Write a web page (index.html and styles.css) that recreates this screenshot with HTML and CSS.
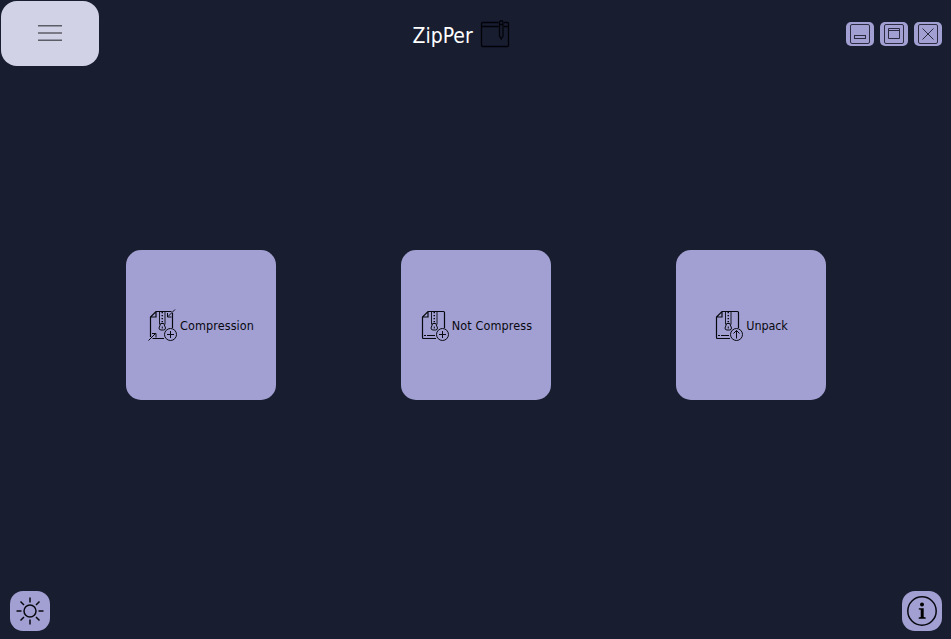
FILE: index.html
```html
<!DOCTYPE html>
<html lang="en">
<head>
<meta charset="utf-8">
<title>ZipPer</title>
<link rel="stylesheet" href="styles.css">
</head>
<body>
<svg class="defs" width="0" height="0" aria-hidden="true">
  <defs>
    <g id="zip">
      <path d="M11.500 2.500v13M17 2.500v13" stroke-width=".9"/>
      <path d="M14.250 3v11" stroke-width="1.500" stroke-dasharray="1.200 1.800"/>
      <path d="M12.700 14.500h3.100l1.700 4.500a2 2 0 0 1-2 2h-2.500a2 2 0 0 1-2-2z"/>
      <path d="M14.250 17.500v2"/>
    </g>
    <g id="sheet">
      <path stroke-width="1.200" d="M16 29.500H3.500a1 1 0 0 1-1-1V8L8 2.500h15.500a1 1 0 0 1 1 1V19M2.500 8H8V2.500"/>
    </g>
  </defs>
</svg>
<div class="window">
  <header class="titlebar">
    <button class="menu" aria-label="Menu">
      <svg width="24" height="20" viewBox="0 0 24 20"><path d="M0 1.700h24M0 9h24M0 16.300h24"/></svg>
    </button>
    <div class="title">
      <h1>ZipPer</h1>
      <svg class="pouch" width="30" height="29" viewBox="0 0 30 29">
        <path d="M18.500 3.500h-16a1 1 0 0 0-1 1v22a1 1 0 0 0 1 1h25a1 1 0 0 0 1-1v-22a1 1 0 0 0-1-1H24M1.500 7.500h17M24 7.500h4.500"/>
        <path d="M19.500 3.500a1.750 1.750 0 0 1 3.500 0V17l-1.750 3L19.500 17zM19.500 5.500H23"/>
      </svg>
    </div>
    <div class="controls">
      <button class="control" aria-label="Minimize">
        <svg width="28" height="24" viewBox="0 0 28 24"><rect x="4.500" y="2.500" width="19" height="19" rx="1.500"/><rect x="8.500" y="13.500" width="11" height="3"/></svg>
      </button>
      <button class="control" aria-label="Maximize">
        <svg width="28" height="24" viewBox="0 0 28 24"><rect x="4.500" y="2.500" width="19" height="19" rx="1.500"/><path d="M8.500 6.500h11v10h-11zM8.500 8.500h11"/></svg>
      </button>
      <button class="control" aria-label="Close">
        <svg width="28" height="24" viewBox="0 0 28 24"><rect x="4.500" y="2.500" width="19" height="19" rx="1.500"/><path d="M8.500 6.500l11 11M19.500 6.500l-11 11"/></svg>
      </button>
    </div>
  </header>
  <main class="actions">
    <button class="card">
      <svg class="line" width="30" height="33" viewBox="0 0 30 33">
        <path stroke-width="1.200" d="M4.500 29.500H16M2.500 28V8L8 2.500h15.500M24.500 4v15M2.500 8H8V2.500"/>
        <use href="#zip"/>
        <path d="M27 .5l-7 7M19.500 4v4h4M.5 31.500l7-7M4 24.500h4v4"/>
        <circle cx="22.500" cy="25.500" r="6"/><path d="M22.500 22v7M19 25.500h7"/>
      </svg>
      <span>Compression</span>
    </button>
    <button class="card">
      <svg class="line" width="30" height="33" viewBox="0 0 30 33">
        <use href="#sheet"/><use href="#zip"/>
        <path d="M4 26.500h2M7 26.500h8"/>
        <circle cx="22.500" cy="25.500" r="6"/><path d="M22.500 22v7M19 25.500h7"/>
      </svg>
      <span>Not Compress</span>
    </button>
    <button class="card">
      <svg class="line" width="30" height="33" viewBox="0 0 30 33">
        <use href="#sheet"/><use href="#zip"/>
        <path d="M4 26.500h2M7 26.500h8"/>
        <circle cx="22.500" cy="25.500" r="6"/><path d="M22.500 29.500v-8M19.500 24.500l3-3 3 3"/>
      </svg>
      <span class="short">Unpack</span>
    </button>
  </main>
  <footer class="bottom">
    <button class="round" aria-label="Theme">
      <svg class="line" width="40" height="40" viewBox="0 0 40 40" stroke-width="1.500">
        <circle cx="20" cy="20" r="6"/>
        <path d="M20 6.500v5M20 28.500v5M6.500 20h5M28.500 20h5M10.500 10.500l3.500 3.500M26 26l3.500 3.500M29.500 10.500L26 14M14 26l-3.500 3.500"/>
      </svg>
    </button>
    <button class="round" aria-label="Information">
      <svg width="40" height="40" viewBox="0 0 40 40">
        <circle cx="20" cy="20" r="14.200" fill="none" stroke="#080810" stroke-width="1.500"/>
        <circle cx="20" cy="13.500" r="2"/>
        <path d="M16.800 17.300h4.900v8.700l2 .6v1.100h-7v-1.100l2-.6v-7.200l-1.900-.4z"/>
      </svg>
    </button>
  </footer>
</div>
</body>
</html>
```
FILE: styles.css
```css
* { box-sizing: border-box; }

body {
  margin: 0;
  background: #191d30;
  font-family: "DejaVu Sans Condensed", "DejaVu Sans", sans-serif;
}

.defs { display: none; }

.window {
  display: flex;
  flex-direction: column;
  height: 639px;
}

button {
  display: flex;
  align-items: center;
  justify-content: center;
  padding: 0;
  border: 0;
  background: #a2a0d2;
  color: #080810;
  font: inherit;
}

svg { display: block; flex: none; }

.line {
  fill: none;
  stroke: #080810;
}

.titlebar {
  display: grid;
  grid-template-columns: 1fr auto 1fr;
  height: 66px;
  padding: 1px 9px 0 1px;
}

.menu {
  width: 98px;
  height: 65px;
  border-radius: 16px;
  background: #d1d2e5;
}

.menu svg {
  stroke: #5d5d68;
  stroke-width: 1.6;
}

.title {
  display: flex;
  align-items: flex-start;
  gap: 7px;
  padding: 18px 0 0;
  margin-right: 21px;
}

.title h1 {
  width: 60px;
  margin: 4px 0 0;
  color: #fff;
  font-size: 21px;
  font-weight: 400;
  line-height: 26px;
  white-space: nowrap;
}

.pouch {
  fill: none;
  stroke: #020309;
  stroke-width: 1.3;
}

.controls {
  display: flex;
  justify-content: flex-end;
  gap: 6px;
  padding-top: 21px;
}

.control {
  width: 28px;
  height: 24px;
  border-radius: 5px;
}

.control svg {
  fill: none;
  stroke: #2c2b42;
}

.actions {
  display: flex;
  flex: 1;
  justify-content: center;
  gap: 125px;
  padding-top: 184px;
}

.card {
  width: 150px;
  height: 150px;
  border-radius: 15px;
  gap: 1px;
  font-size: 12.5px;
  white-space: nowrap;
}

.card span {
  padding-left: 1px;
  margin-right: -1px;
  letter-spacing: 0.1px;
}

.card .short { letter-spacing: -0.1px; }

.bottom {
  display: flex;
  justify-content: space-between;
  padding: 0 9px 8px 10px;
}

.round {
  width: 40px;
  height: 40px;
  border-radius: 13px;
}
```
